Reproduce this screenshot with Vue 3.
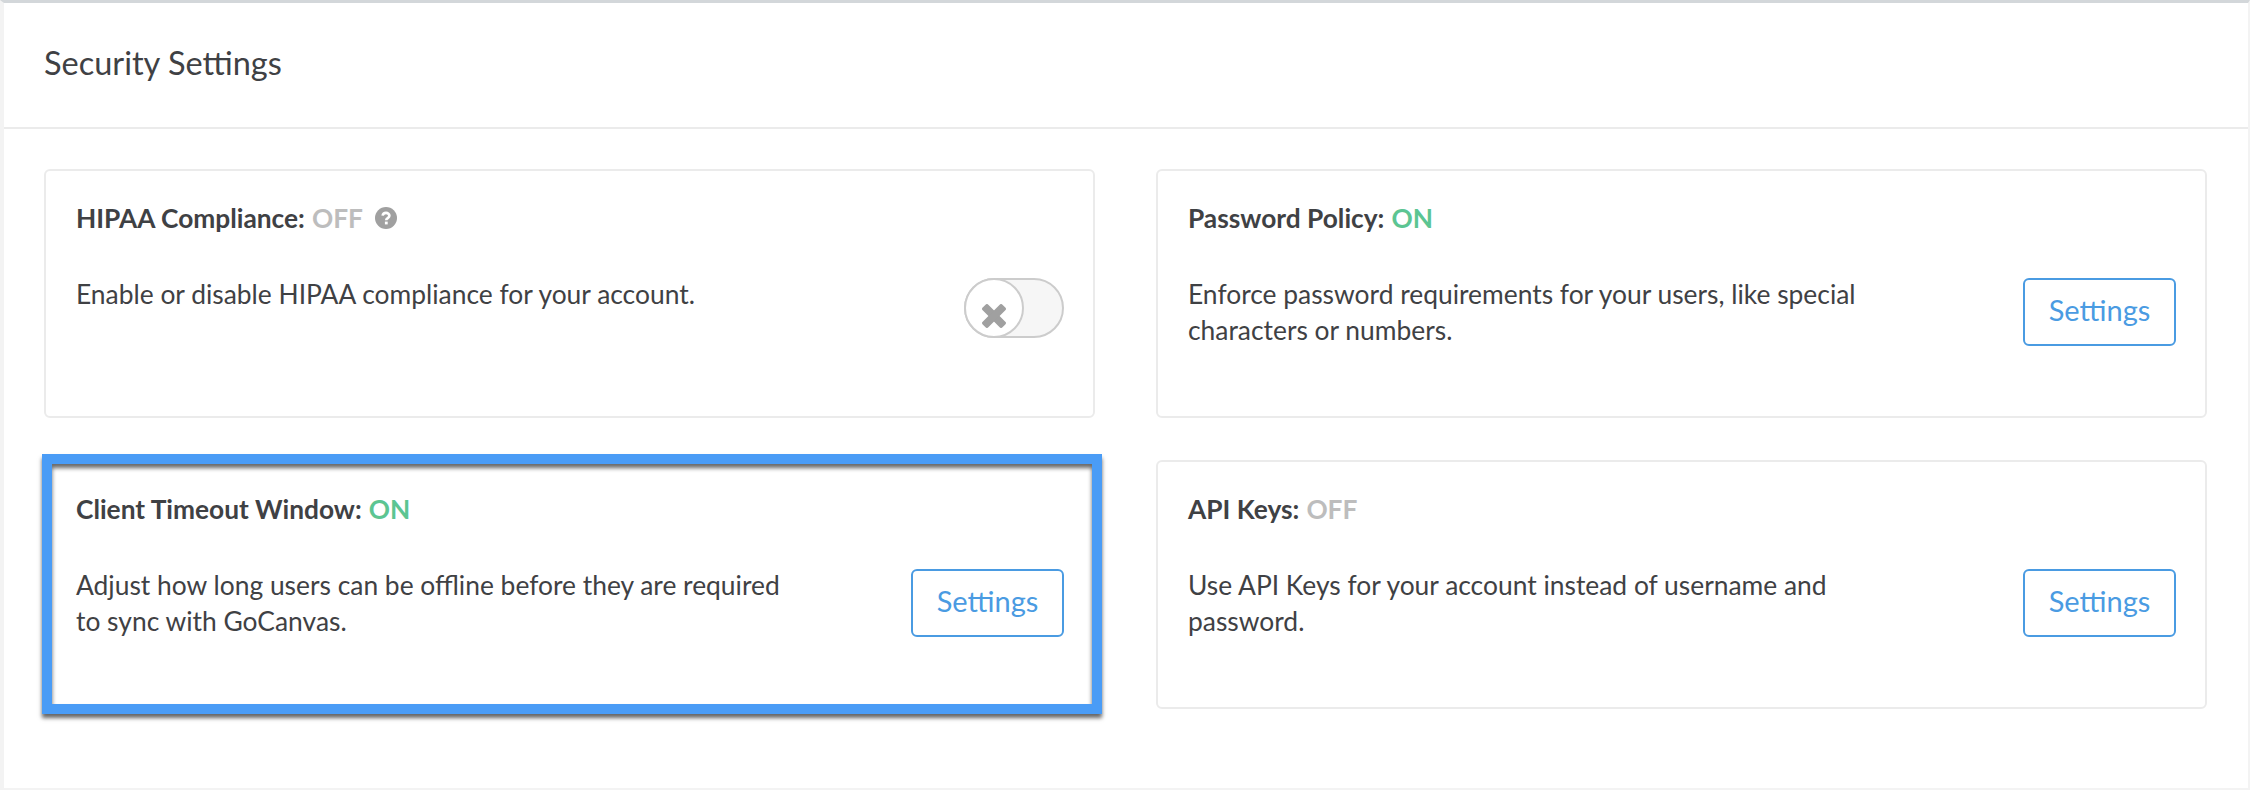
<template>
  <div class="page">
    <header class="page-head">
      <h1>Security Settings</h1>
    </header>
    <div class="card-grid">
      <section
        v-for="card in cards"
        :key="card.name"
        :class="['card', { marked: card.marked }]"
      >
        <h2 class="card-title">
          {{ card.name }}:
          <span :class="card.on ? 'state-on' : 'state-off'">{{ card.on ? 'ON' : 'OFF' }}</span>
          <svg v-if="card.help" class="help-icon" viewBox="0 0 22 22" aria-hidden="true">
            <circle cx="11" cy="11" r="11" fill="#a0a0a0" />
            <path d="M7.6 8.6c.3-1.8 1.7-2.7 3.4-2.7 1.9 0 3.4 1.1 3.4 2.8 0 2.4-3.2 2.3-3.2 4.5" fill="none" stroke="#fff" stroke-width="2.6" />
            <rect x="9.9" y="14.6" width="2.8" height="2.8" fill="#fff" />
          </svg>
        </h2>
        <div class="card-body">
          <p class="card-desc">{{ card.desc }}</p>
          <div v-if="card.toggle" class="toggle">
            <div class="knob">
              <svg class="x-icon" viewBox="0 0 24 24" aria-hidden="true">
                <rect x="-2" y="8" width="28" height="8" rx="2" fill="#a0a0a0" transform="rotate(45 12 12)" />
                <rect x="-2" y="8" width="28" height="8" rx="2" fill="#a0a0a0" transform="rotate(-45 12 12)" />
              </svg>
            </div>
          </div>
          <button v-else class="settings-btn">Settings</button>
        </div>
      </section>
    </div>
  </div>
</template>

<script setup>
const cards = [
  {
    name: 'HIPAA Compliance',
    on: false,
    help: true,
    toggle: true,
    desc: 'Enable or disable HIPAA compliance for your account.'
  },
  {
    name: 'Password Policy',
    on: true,
    desc: 'Enforce password requirements for your users, like special characters or numbers.'
  },
  {
    name: 'Client Timeout Window',
    on: true,
    marked: true,
    desc: 'Adjust how long users can be offline before they are required to sync with GoCanvas.'
  },
  {
    name: 'API Keys',
    on: false,
    desc: 'Use API Keys for your account instead of username and password.'
  }
]
</script>

<style>
html, body {
  margin: 0;
  background: #fff;
}
</style>

<style scoped>
.page {
  box-sizing: border-box;
  width: 2250px;
  height: 790px;
  background: #fff;
  border-top: 3px solid #d3d7da;
  border-left: 4px solid #f3f3f3;
  border-right: 2px solid #f3f3f3;
  border-bottom: 2px solid #f3f3f3;
  font-family: "Lato", "Open Sans", sans-serif;
  color: #3f4144;
}
.page-head {
  height: 124px;
  border-bottom: 2px solid #ebebeb;
  display: flex;
  align-items: center;
  padding-left: 40px;
}
.page-head h1 {
  margin: 0 0 6px;
  font-size: 32.5px;
  font-weight: 400;
}
.card-grid {
  display: grid;
  grid-template-columns: 1051px 1051px;
  grid-template-rows: 249px 249px;
  column-gap: 61px;
  row-gap: 42px;
  padding: 40px 0 0 40px;
}
.card {
  position: relative;
  box-sizing: border-box;
  border: 2px solid #ebebeb;
  border-radius: 6px;
  padding: 29px 29px 0 30px;
}
.card.marked::after {
  content: "";
  position: absolute;
  left: -4px;
  right: -9px;
  top: -8px;
  bottom: -7px;
  border: 10px solid #4a9cf6;
  box-shadow: 0 4px 4px rgba(0, 0, 0, 0.6), inset 0 4px 4px rgba(0, 0, 0, 0.6);
  pointer-events: none;
}
.card-title {
  margin: 0 0 42px;
  font-size: 26.3px;
  line-height: 36px;
  font-weight: 700;
  display: flex;
  align-items: center;
  gap: 7px;
}
.state-on {
  color: #5cc592;
}
.state-off {
  color: #bdbdbd;
}
.help-icon {
  width: 22px;
  height: 22px;
  margin-left: 5px;
}
.card-body {
  display: flex;
  justify-content: space-between;
  align-items: flex-start;
}
.card-desc {
  margin: -2px 0 0;
  width: 720px;
  font-size: 26.4px;
  line-height: 36px;
}
.toggle {
  position: relative;
  box-sizing: border-box;
  width: 100px;
  height: 60px;
  background: #f6f6f6;
  border: 2px solid #cccccc;
  border-radius: 30px;
}
.knob {
  position: absolute;
  left: -2px;
  top: -2px;
  box-sizing: border-box;
  width: 60px;
  height: 60px;
  background: #fff;
  border: 2px solid #cccccc;
  border-radius: 50%;
  display: flex;
  align-items: center;
  justify-content: center;
}
.x-icon {
  width: 24px;
  height: 24px;
  margin-top: 16px;
}
.settings-btn {
  box-sizing: border-box;
  width: 153px;
  height: 68px;
  border: 2px solid #4a9be2;
  border-radius: 6px;
  background: #fff;
  color: #4a9be2;
  font-family: inherit;
  font-size: 29px;
  padding: 0 0 5px;
}
</style>
